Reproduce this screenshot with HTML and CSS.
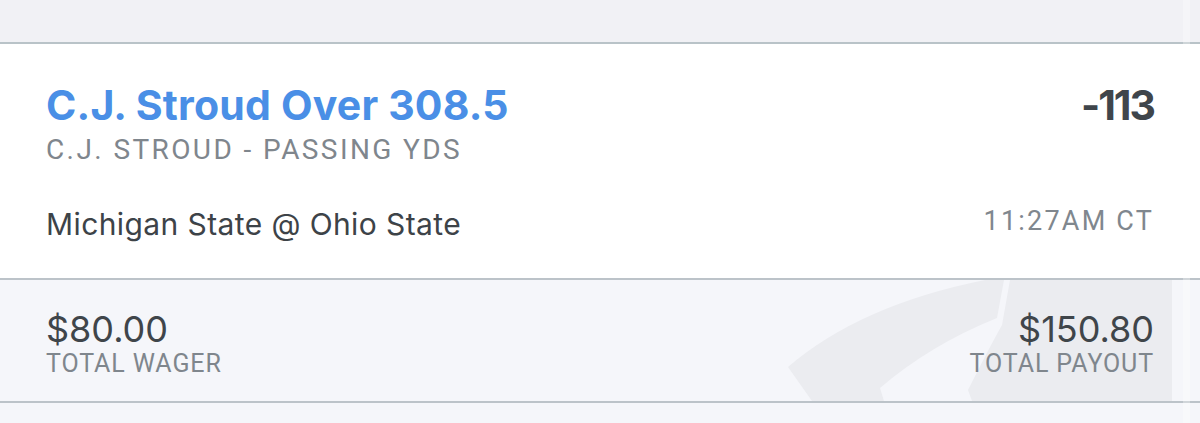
FILE: index.html
```html
<!DOCTYPE html>
<html>
<head>
<meta charset="utf-8">
<link rel="stylesheet" href="styles.css">
</head>
<body>
<div class="top"></div>
<div class="card">
  <div class="row row-title">
    <div class="title">C.J. Stroud Over 308.5</div>
    <div class="odds">-113</div>
  </div>
  <div class="sub">C.J. STROUD - PASSING YDS</div>
  <div class="row row-game">
    <div class="game">Michigan State @ Ohio State</div>
    <div class="time">11:27AM CT</div>
  </div>
</div>
<div class="footer">
  <svg class="mark" viewBox="0 0 1200 121" width="1200" height="121" aria-hidden="true">
    <path d="M788 87 Q860 25 985 0 L1004 0 L997 38 Q930 65 880 108 L884 121 L812 121 Z" fill="#ebecf0"/>
    <path d="M1010 0 L1172 0 L1172 121 L972 121 L968 110 Q988 70 1002 45 Z" fill="#ebecf0"/>
  </svg>
  <div class="amt">
    <div class="money">$80.00</div>
    <div class="label">TOTAL WAGER</div>
  </div>
  <div class="amt amt-right">
    <div class="money">$150.80</div>
    <div class="label">TOTAL PAYOUT</div>
  </div>
</div>
<div class="bottom"></div>
<div class="edge"></div>
</body>
</html>
```

FILE: styles.css
```css
html, body {
  margin: 0;
  padding: 0;
}
body {
  position: relative;
  width: 1200px;
  height: 423px;
  overflow: hidden;
  background: #f5f6fa;
  font-family: Inter, Lato, sans-serif;
}
.top {
  height: 42px;
  background: #f1f1f5;
  border-bottom: 2px solid #b9c3c8;
}
.card {
  height: 234px;
  background: #ffffff;
  padding: 0 46px 0 46px;
  box-sizing: border-box;
  display: flex;
  flex-direction: column;
}
.row {
  display: flex;
  justify-content: space-between;
}
.row-title {
  margin-top: 37px;
  align-items: baseline;
}
.title {
  font-weight: 700;
  font-size: 41px;
  line-height: 48px;
  color: #4a8fe6;
  letter-spacing: 0.2px;
}
.odds {
  font-weight: 700;
  font-size: 41px;
  line-height: 48px;
  color: #3f454b;
  letter-spacing: -2px;
}
.sub {
  font-family: Roboto, sans-serif;
  font-size: 28px;
  line-height: 32px;
  letter-spacing: 2.4px;
  color: #7f868d;
  margin-top: 5px;
}
.row-game {
  margin-top: 40px;
  align-items: flex-start;
}
.game {
  font-size: 30px;
  line-height: 36px;
  letter-spacing: 0.4px;
  color: #3d4348;
}
.time {
  font-family: Roboto, sans-serif;
  font-size: 27px;
  line-height: 32px;
  letter-spacing: 2.2px;
  color: #80878e;
  margin-top: -1px;
}
.footer {
  position: relative;
  height: 121px;
  border-top: 2px solid #bcc3c9;
  border-bottom: 2px solid #bcc3c9;
  background: #f5f6fa;
  padding: 0 46px;
  display: flex;
  justify-content: space-between;
  align-items: flex-start;
  overflow: hidden;
}
.mark {
  position: absolute;
  left: 0;
  top: 0;
}
.amt {
  position: relative;
  margin-top: 29px;
}
.amt-right {
  text-align: right;
}
.money {
  font-size: 36px;
  line-height: 40px;
  color: #3f454a;
}
.label {
  font-family: Roboto, sans-serif;
  font-size: 25px;
  line-height: 30px;
  letter-spacing: 0.9px;
  color: #7f868d;
}
.bottom {
  height: 20px;
}
.edge {
  position: absolute;
  top: 0;
  left: 1183px;
  width: 7px;
  height: 423px;
  background: rgba(255, 255, 255, 0.3);
}
```
